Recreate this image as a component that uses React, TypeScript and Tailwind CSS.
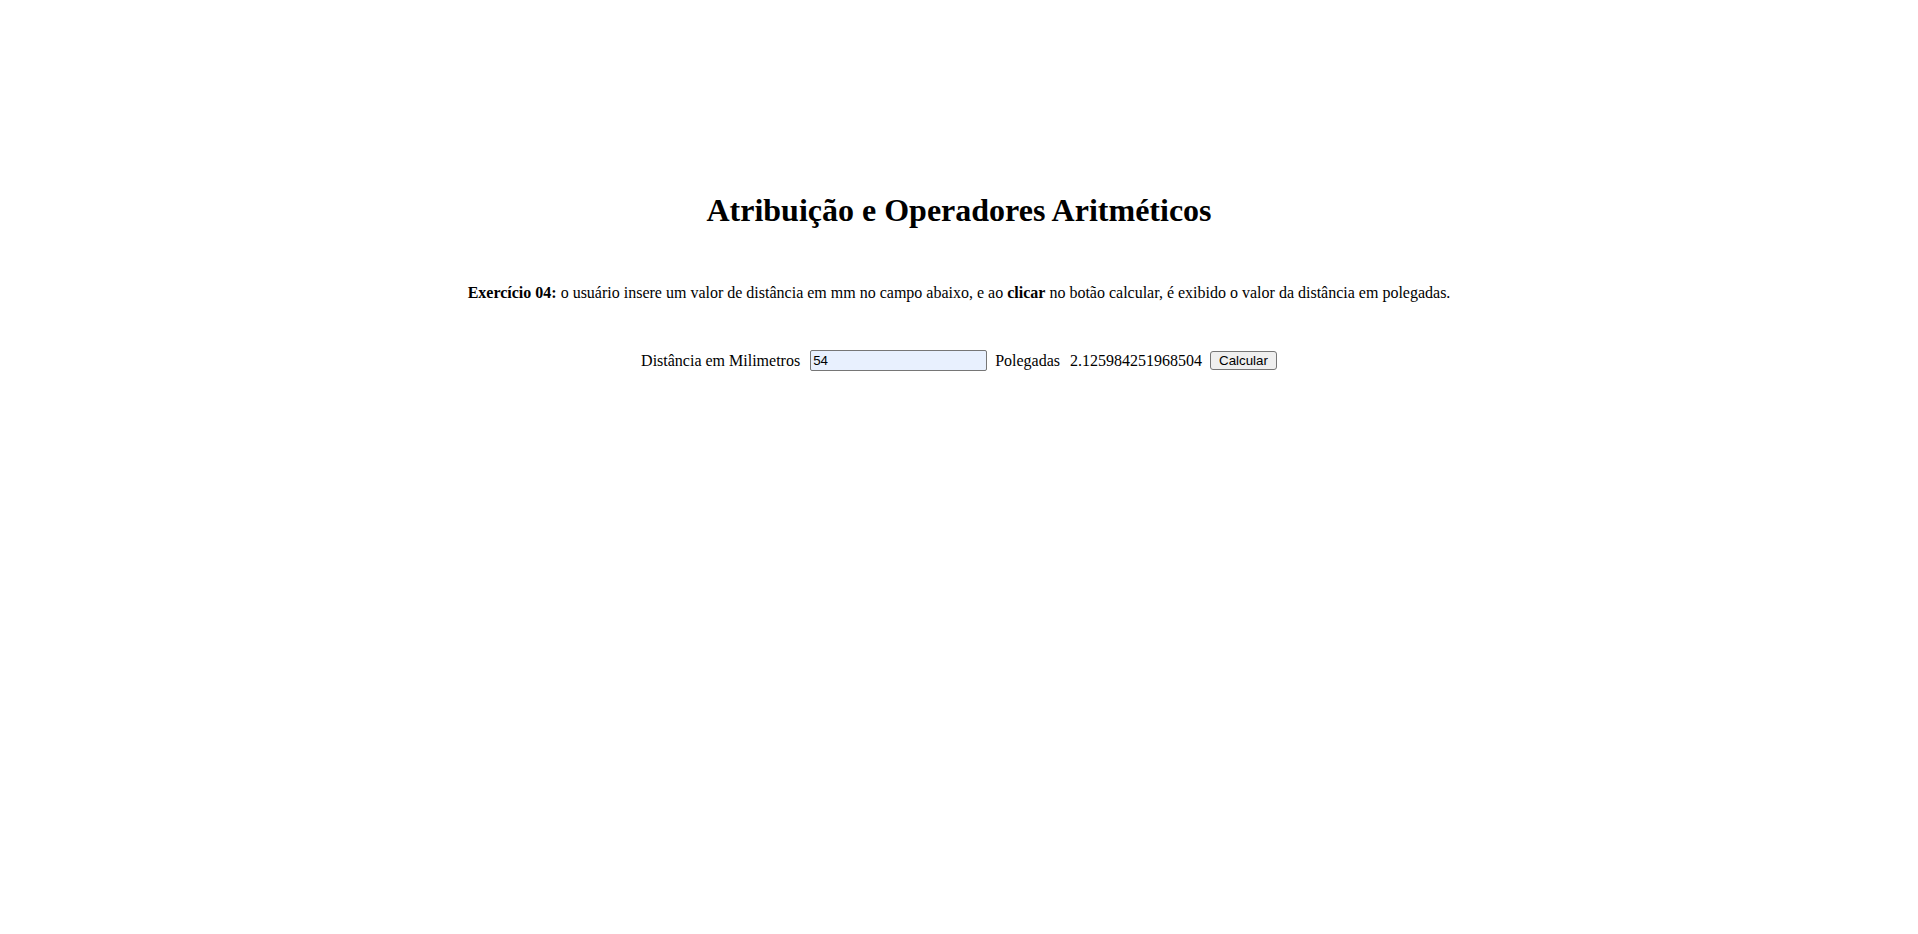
import { useState } from "react";

export default function App() {
  const [mm, setMm] = useState("54");
  const [pol, setPol] = useState("2.125984251968504");

  const calcular = () => {
    const v = Number(mm);
    setPol(String(v / 25.4));
  };

  return (
    <div className="min-h-screen bg-white text-black font-['Liberation_Serif','Times_New_Roman',serif]">
      <div className="flex flex-col items-center pt-[192px]">
        <h1 className="text-[32px] leading-[37px] font-bold">Atribuição e Operadores Aritméticos</h1>

        <p className="mt-[55px] text-[16px] leading-[18px]">
          <b>Exercício 04:</b> o usuário insere um valor de distância em mm no campo abaixo, e ao <b>clicar</b> no botão
          calcular, é exibido o valor da distância em polegadas.
        </p>

        <div className="mt-[48px] flex items-center text-[16px] leading-[18px]">
          <label htmlFor="mm">Distância em Milimetros</label>
          <input
            id="mm"
            type="text"
            value={mm}
            onChange={(e) => setMm(e.target.value)}
            className="ml-[10px] w-[177px] h-[21px] px-[2px] border border-[#767676] rounded-[2px] bg-[#e8f0fe] text-[13.33px] font-['Liberation_Sans',Arial,sans-serif] outline-none"
          />
          <span className="ml-[8px]">Polegadas</span>
          <span className="ml-[10px]">{pol}</span>
          <button
            onClick={calcular}
            className="ml-[8px] h-[19px] px-[8px] border border-[#767676] rounded-[3px] bg-[#efefef] text-[13.33px] leading-[15px] font-['Liberation_Sans',Arial,sans-serif]"
          >
            Calcular
          </button>
        </div>
      </div>
    </div>
  );
}
